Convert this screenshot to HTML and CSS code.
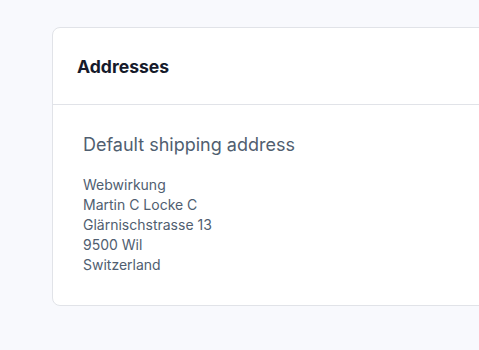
FILE: index.html
```html
<!DOCTYPE html>
<html>
<head>
<meta charset="utf-8">
<link rel="stylesheet" href="styles.css">
</head>
<body>
<main class="page">
  <section class="card">
    <header class="card-header">
      <h2 class="card-title">Addresses</h2>
    </header>
    <div class="card-body">
      <h3 class="address-title">Default shipping address</h3>
      <address class="address">
        Webwirkung<br>
        Martin C Locke C<br>
        Glärnischstrasse 13<br>
        9500 Wil<br>
        Switzerland
      </address>
    </div>
  </section>
</main>
</body>
</html>
```

FILE: styles.css
```css
html, body {
  margin: 0;
  padding: 0;
  background: #f8f9fd;
  overflow: hidden;
  font-family: Inter, "Noto Sans", sans-serif;
}
.page {
  padding: 27px 0 0 52px;
  width: 700px;
}
.card {
  width: 600px;
  background: #ffffff;
  border: 1px solid #e1e3e8;
  border-radius: 8px;
}
.card-header {
  height: 76px;
  display: flex;
  align-items: center;
  padding: 0 24px;
  border-bottom: 1px solid #e1e3e8;
}
.card-title {
  margin: 0;
  font-size: 17.6px;
  font-weight: 700;
  color: #161a2b;
}
.card-body {
  padding: 28px 30px 30px;
}
.address-title {
  margin: 0 0 18px;
  font-size: 18px;
  line-height: 24px;
  font-weight: 400;
  color: #505e70;
}
.address {
  font-style: normal;
  font-size: 14px;
  line-height: 20px;
  color: #505e70;
}
```
